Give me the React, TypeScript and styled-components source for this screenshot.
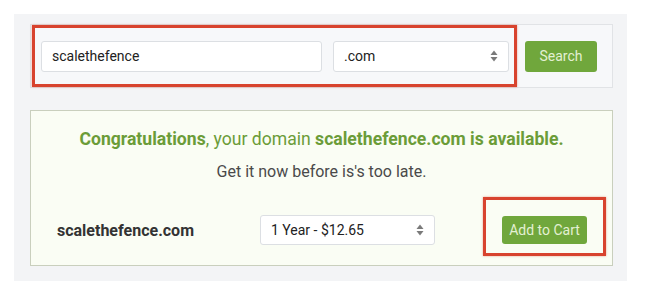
import React from "react";
import styled, { createGlobalStyle } from "styled-components";

const GlobalStyle = createGlobalStyle`
  html, body {
    margin: 0;
    padding: 0;
    background: #ffffff;
  }
  body {
    font-family: Roboto, "Liberation Sans", Arial, sans-serif;
    color: #333333;
  }
`;

const Page = styled.div`
  width: 646px;
  height: 291px;
  padding: 14px 19px 10px 14px;
  box-sizing: border-box;
`;

const Panel = styled.div`
  background: #f3f4f6;
  padding: 10px 14px 15px 16px;
  display: flex;
  flex-direction: column;
  gap: 22px;
  height: 267px;
  box-sizing: border-box;
`;

const SearchCard = styled.div`
  position: relative;
  display: flex;
  align-items: center;
  height: 64px;
  box-sizing: border-box;
  border: 1px solid #e1e3e6;
  background: #f7f8fa;
  padding: 0 15px 0 10px;
`;

const Highlight = styled.div<{ $left: number; $top: number; $w: number; $h: number }>`
  position: absolute;
  left: ${(p) => p.$left}px;
  top: ${(p) => p.$top}px;
  width: ${(p) => p.$w}px;
  height: ${(p) => p.$h}px;
  border: 3px solid #d8432e;
  box-sizing: border-box;
  pointer-events: none;
  box-shadow: 0 0 2px rgba(216, 67, 46, 0.5);
`;

const Field = styled.div<{ $w: number; $h?: number }>`
  width: ${(p) => p.$w}px;
  height: ${(p) => p.$h ?? 31}px;
  box-sizing: border-box;
  background: #ffffff;
  border: 1px solid #dcdfe3;
  border-radius: 3px;
  display: flex;
  align-items: center;
  justify-content: space-between;
  padding: 0 10px 0 10px;
  font-size: 14px;
  color: #222222;
`;

const Gap = styled.div<{ $w: number }>`
  width: ${(p) => p.$w}px;
  flex: none;
`;

const Button = styled.button<{ $w: number; $h: number }>`
  width: ${(p) => p.$w}px;
  height: ${(p) => p.$h}px;
  background: #70a73c;
  border: none;
  border-radius: 3px;
  color: #e3f0d3;
  font-family: Roboto, "Liberation Sans", Arial, sans-serif;
  font-size: 14px;
  padding: 0;
  flex: none;
`;

const ResultCard = styled.div`
  position: relative;
  height: 156px;
  box-sizing: border-box;
  border: 1px solid #c9cfbd;
  background: #fafdf4;
  display: flex;
  flex-direction: column;
  align-items: center;
  padding-top: 18px;
`;

const Headline = styled.div`
  font-size: 17.6px;
  color: #6b9c38;
  line-height: 20px;
  b {
    font-weight: 700;
  }
`;

const Sub = styled.div`
  margin-top: 13px;
  font-size: 16px;
  color: #4a4a4a;
  line-height: 20px;
`;

const BuyRow = styled.div`
  align-self: stretch;
  margin-top: 33px;
  display: flex;
  align-items: center;
  padding: 0 25px 0 26px;
`;

const DomainName = styled.div`
  width: 203px;
  font-size: 16px;
  font-weight: 700;
  color: #333333;
`;

const Spacer = styled.div`
  flex: 1;
`;

const Arrows = () => (
  <svg width="8" height="12" viewBox="0 0 8 12">
    <polygon points="4,0.5 7.5,5 0.5,5" fill="#7a7a7a" />
    <polygon points="0.5,7 7.5,7 4,11.5" fill="#7a7a7a" />
  </svg>
);

export default function App() {
  return (
    <>
      <GlobalStyle />
      <Page>
        <Panel>
          <SearchCard>
            <Field $w={281}>scalethefence</Field>
            <Gap $w={11} />
            <Field $w={176}>
              .com
              <Arrows />
            </Field>
            <Gap $w={16} />
            <Button $w={72} $h={31}>Search</Button>
            <Highlight $left={1} $top={0} $w={485} $h={62} />
          </SearchCard>
          <ResultCard>
            <Headline>
              <b>Congratulations</b>, your domain <b>scalethefence.com is available.</b>
            </Headline>
            <Sub>Get it now before is's too late.</Sub>
            <BuyRow>
              <DomainName>scalethefence.com</DomainName>
              <Field $w={175} $h={30}>
                1 Year - $12.65
                <Arrows />
              </Field>
              <Spacer />
              <Button $w={85} $h={28}>Add to Cart</Button>
            </BuyRow>
            <Highlight $left={452} $top={86} $w={123} $h={59} />
          </ResultCard>
        </Panel>
      </Page>
    </>
  );
}
